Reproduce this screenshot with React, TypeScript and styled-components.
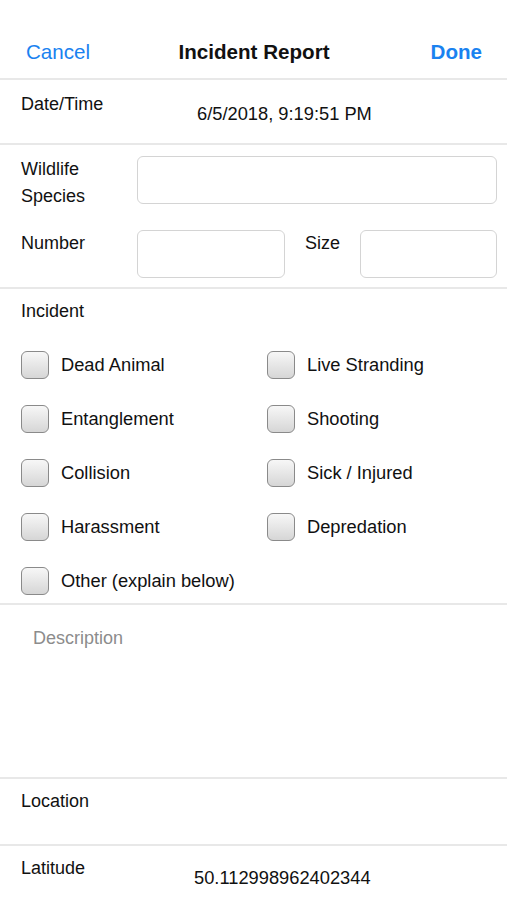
import React from "react";
import styled, { createGlobalStyle } from "styled-components";

const GlobalStyle = createGlobalStyle`
  html, body {
    margin: 0;
    padding: 0;
    background: #ffffff;
  }
  body {
    font-family: "Liberation Sans", Arial, sans-serif;
    color: #111;
  }
`;

const Page = styled.div`
  width: 507px;
  height: 900px;
  overflow: hidden;
  background: #fff;
`;

const NavBar = styled.div`
  height: 80px;
  padding: 26px 25px 0 26px;
  box-sizing: border-box;
  display: flex;
  align-items: center;
  justify-content: space-between;
  border-bottom: 2px solid #e8e8e8;
`;

const NavButton = styled.span<{ $bold?: boolean }>`
  color: #1a82f0;
  font-size: 20.6px;
  font-weight: ${(p) => (p.$bold ? 600 : 400)};
  width: 70px;
  text-align: ${(p) => (p.$bold ? "right" : "left")};
`;

const NavTitle = styled.span`
  font-size: 20.6px;
  font-weight: 600;
  color: #111;
`;

const Section = styled.div<{ $height: number }>`
  height: ${(p) => p.$height}px;
  box-sizing: border-box;
  border-bottom: 2px solid #e8e8e8;
  padding: 0 10px 0 21px;
`;

const Label = styled.div`
  font-size: 18px;
  line-height: 27px;
  color: #111;
`;

const ValueRow = styled.div<{ $top?: number }>`
  display: flex;
  padding-top: ${(p) => p.$top ?? 11}px;
`;

const LabelCol = styled.div`
  width: 116px;
  flex-shrink: 0;
`;

const Value = styled.div<{ $offset: number }>`
  font-size: 18.3px;
  padding-top: 12px;
  margin-left: ${(p) => p.$offset}px;
`;

const FieldGrid = styled.div`
  display: grid;
  grid-template-columns: 116px 148px 75px 137px;
  row-gap: 20px;
  padding-top: 11px;
`;

const Input = styled.div<{ $span?: number }>`
  grid-column: span ${(p) => p.$span ?? 1};
  height: 48px;
  box-sizing: border-box;
  border: 1.5px solid #d4d4d4;
  border-radius: 6px;
  background: #fff;
`;

const FieldLabel = styled(Label)<{ $pad?: number }>`
  padding-left: ${(p) => p.$pad ?? 0}px;
  padding-top: 0;
`;

const IncidentHead = styled(Label)`
  padding-top: 9px;
`;

const CheckGrid = styled.div`
  display: grid;
  grid-template-columns: 246px 1fr;
  grid-auto-rows: 54px;
  padding-top: 25px;
`;

const CheckItem = styled.label`
  display: flex;
  align-items: center;
  gap: 12px;
  height: 30px;
  font-size: 18.3px;
  color: #111;
`;

const Box = styled.span`
  width: 28px;
  height: 28px;
  box-sizing: border-box;
  border: 1.5px solid #8a8a8a;
  border-radius: 6px;
  background: linear-gradient(#f7f7f7, #d6d6d6);
  flex-shrink: 0;
`;

const Placeholder = styled.div`
  font-size: 18px;
  color: #8c8c8c;
  padding: 23px 0 0 12px;
`;

const incidents = [
  "Dead Animal",
  "Live Stranding",
  "Entanglement",
  "Shooting",
  "Collision",
  "Sick / Injured",
  "Harassment",
  "Depredation",
  "Other (explain below)",
];

export default function App() {
  return (
    <Page>
      <GlobalStyle />
      <NavBar>
        <NavButton>Cancel</NavButton>
        <NavTitle>Incident Report</NavTitle>
        <NavButton $bold>Done</NavButton>
      </NavBar>

      <Section $height={65}>
        <ValueRow>
          <LabelCol>
            <Label>Date/Time</Label>
          </LabelCol>
          <Value $offset={60}>6/5/2018, 9:19:51 PM</Value>
        </ValueRow>
      </Section>

      <Section $height={144}>
        <FieldGrid>
          <FieldLabel>
            Wildlife
            <br />
            Species
          </FieldLabel>
          <Input $span={3} />
          <FieldLabel>Number</FieldLabel>
          <Input />
          <FieldLabel $pad={20}>Size</FieldLabel>
          <Input />
        </FieldGrid>
      </Section>

      <Section $height={316}>
        <IncidentHead>Incident</IncidentHead>
        <CheckGrid>
          {incidents.map((name) => (
            <CheckItem key={name}>
              <Box />
              {name}
            </CheckItem>
          ))}
        </CheckGrid>
      </Section>

      <Section $height={174}>
        <Placeholder>Description</Placeholder>
      </Section>

      <Section $height={67}>
        <IncidentHead>Location</IncidentHead>
      </Section>

      <Section $height={80}>
        <ValueRow $top={9}>
          <LabelCol>
            <Label>Latitude</Label>
          </LabelCol>
          <Value $offset={57}>50.112998962402344</Value>
        </ValueRow>
      </Section>
    </Page>
  );
}
